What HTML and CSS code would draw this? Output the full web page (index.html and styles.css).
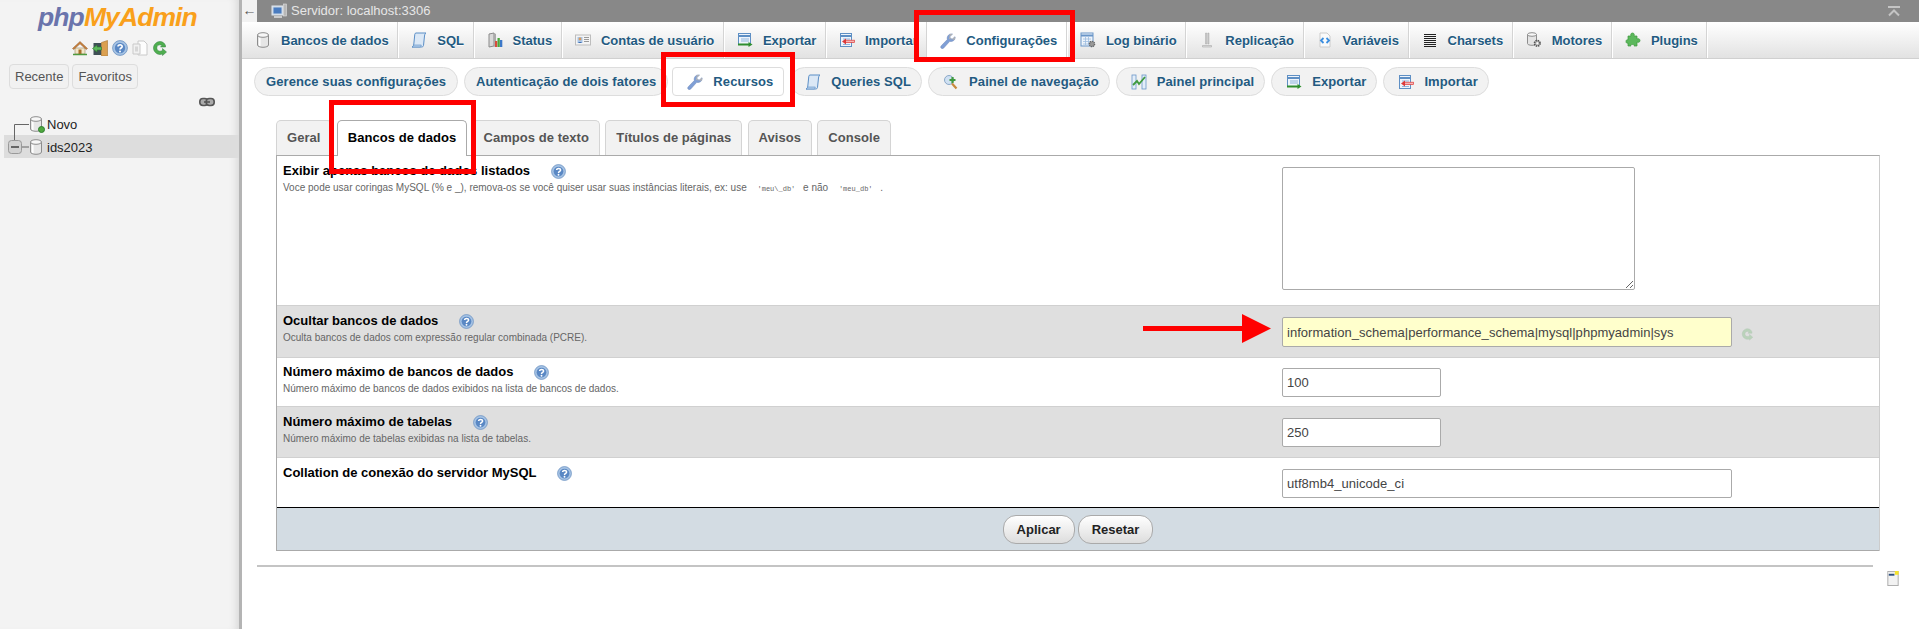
FILE: index.html
```html
<!DOCTYPE html>
<html lang="pt-BR">
<head>
    <meta charset="UTF-8">
    <title>phpMyAdmin</title>
    <link rel="stylesheet" href="styles.css">
</head>
<body>
    <svg class="defs" width="0" height="0">
        <symbol id="i-db" viewBox="0 0 16 16"><path d="M2.500 3v10c0 1.300 2.500 2.300 5.500 2.300s5.500-1 5.500-2.300V3z" fill="#e6e6e6" stroke="#8d8d8d"/><ellipse cx="8" cy="3" rx="5.500" ry="2.300" fill="#f7f7f7" stroke="#8d8d8d"/><path d="M4.800 6v8" stroke="#fff" stroke-width="1.500"/></symbol>
        <symbol id="i-sql" viewBox="0 0 16 16"><path d="M5 1h10c-1 .6-1.300 1.600-1.500 3l-1 9.500c-.1 1-1 1.500-2 1.500H1c1.200-.6 1.700-1.500 1.800-3L3.800 2.300C3.900 1.500 4.300 1 5 1z" fill="#dbe8f6" stroke="#5a8ec6"/><path d="M1 15c1.200-.6 1.500-1.300 1.700-2h7.600c-.1 1-.5 1.600-1 2z" fill="#b5cfea" stroke="#5a8ec6" stroke-width=".6"/></symbol>
        <symbol id="i-status" viewBox="0 0 16 16"><path d="M2 2l5-1v13l-5 1z" fill="#d8d8d8" stroke="#8a8a8a"/><path d="M7 1l2 1v12l-2 1z" fill="#aaa"/><rect x="8" y="9" width="2.300" height="6" fill="#d84c3c"/><rect x="10.500" y="6" width="2.300" height="9" fill="#4aa83c"/><rect x="13" y="8" width="2.300" height="7" fill="#3c78c8"/></symbol>
        <symbol id="i-user" viewBox="0 0 16 16"><rect x=".5" y="3" width="15" height="10" fill="#f4f4f4" stroke="#bdbdbd"/><rect x="2.500" y="5" width="5" height="6" fill="#a9c6e8"/><circle cx="5" cy="7" r="1.400" fill="#d99a5c"/><path d="M3 11c.3-1.500 3.700-1.500 4 0z" fill="#3d6db0"/><path d="M9 5.500h5M9 7.500h5M9 9.500h5" stroke="#9a9a9a"/></symbol>
        <symbol id="i-export" viewBox="0 0 16 16"><rect x="1.500" y="1.500" width="12" height="11" fill="#eef4fb" stroke="#5e8fc4"/><path d="M1.500 4h12" stroke="#5e8fc4" stroke-width="2"/><path d="M4 7h8M4 9h8" stroke="#8fb5dc"/><path d="M1 12.500h11.500" stroke="#2f8f2f" stroke-width="2"/><path d="M11.500 10l4 2.500-4 2.500z" fill="#2f8f2f"/></symbol>
        <symbol id="i-import" viewBox="0 0 16 16"><rect x="1.500" y="1.500" width="11" height="13" fill="#eef4fb" stroke="#5e8fc4"/><path d="M1.500 4h11" stroke="#5e8fc4" stroke-width="2"/><path d="M4 7h7M4 12.500h7" stroke="#8fb5dc"/><rect x="6" y="8.200" width="9.500" height="2.400" fill="#f7b5b5" stroke="#dc3a3a" stroke-width=".7"/><path d="M7 6.500l-4 3 4 3z" fill="#dc3a3a"/></symbol>
        <symbol id="i-wrench" viewBox="0 0 16 16"><path d="M1.300 15.200c-.8-.7-.8-1.700 0-2.500l6-6.200c-.5-2 .2-4.300 2.500-5.300.9-.4 1.900-.4 2.700-.1L9.900 3.600l.4 2 2 .5 2.700-2.400c.3 1 .1 2.200-.6 3.100-1.100 1.600-3 2-4.600 1.500L3.700 15c-.7.800-1.700.9-2.400.2z" fill="#7f9fd6" stroke="#6a84b4" stroke-width=".5"/><path d="M9.800 1.200c.9-.4 1.900-.4 2.700-.1L9.900 3.600l.4 2 2 .5 2.700-2.400c.3 1 .1 2.200-.6 3.100L9 6z" fill="#b4b4b4"/></symbol>
        <symbol id="i-log" viewBox="0 0 16 16"><rect x="1" y="1" width="12" height="13" fill="#eef4fb" stroke="#6a96c8"/><path d="M1 3.500h12" stroke="#6a96c8" stroke-width="2"/><path d="M3 7h8M3 9.500h8M3 12h8M5.500 5v8M8.500 5v8" stroke="#9dbde0" stroke-width=".8"/><circle cx="12" cy="12" r="2.600" fill="#9a9a9a" stroke="#666" stroke-width="1.400" stroke-dasharray="1.300 .7"/></symbol>
        <symbol id="i-repl" viewBox="0 0 16 16"><path d="M6.500 1h1.200v11H6.500zM8.800 1H10v11H8.800z" fill="#ccc" stroke="#999" stroke-width=".4"/><path d="M3.500 13.500h9v1.500h-9z" fill="#ddd" stroke="#aaa" stroke-width=".6"/></symbol>
        <symbol id="i-vars" viewBox="0 0 16 16"><path d="M3 1h7l3 3v11H3z" fill="#fafafa" stroke="#ccc"/><path d="M6.500 6L4 8.500 6.500 11M9.500 6L12 8.500 9.500 11" fill="none" stroke="#3c8fe0" stroke-width="1.800"/></symbol>
        <symbol id="i-charset" viewBox="0 0 16 16"><path d="M2 2.500h12M2 4.500h12M2 6.500h12M2 8.500h12M2 10.500h12M2 12.500h12M2 14.500h12" stroke="#222"/></symbol>
        <symbol id="i-engine" viewBox="0 0 16 16"><path d="M1.500 2.500v9c0 1 1.800 1.800 4.500 1.800s4.500-.8 4.500-1.800v-9z" fill="#e4e4e4" stroke="#8d8d8d"/><ellipse cx="6" cy="2.500" rx="4.500" ry="1.800" fill="#f7f7f7" stroke="#8d8d8d"/><circle cx="11.300" cy="11.300" r="2.800" fill="#bbb" stroke="#555" stroke-width="1.600" stroke-dasharray="1.400 .8"/><circle cx="11.300" cy="11.300" r="1" fill="#fff"/></symbol>
        <symbol id="i-plugin" viewBox="0 0 16 16"><path d="M3 4h3c-.5-1-.5-3 1.500-3S9.500 3 9 4h3v3c1-.5 3-.5 3 1.500S13 10.500 12 10v4H9c.5-1 .5-1.500-1.500-1.500S5.500 13 6 14H3v-3c-1 .4-2 .2-2-1.500S2 7.600 3 8z" fill="#5cb85c" stroke="#3d9a3d" stroke-width=".7"/></symbol>
        <symbol id="i-nav" viewBox="0 0 16 16"><circle cx="6" cy="6" r="4.500" fill="#cfe0f2" stroke="#8aa8c8"/><path d="M9 9.500l4.500 5" stroke="#c88a3c" stroke-width="2.200"/><path d="M9.500 3v6M6.500 6h6" stroke="#3f9a3f" stroke-width="2.200"/></symbol>
        <symbol id="i-main" viewBox="0 0 16 16"><rect x="1" y="1" width="4" height="14" fill="#e4eef9" stroke="#6a96c8" stroke-width=".8"/><rect x="11" y="1" width="4" height="14" fill="#e4eef9" stroke="#6a96c8" stroke-width=".8"/><path d="M2 11l4-4 2 3 6-7" fill="none" stroke="#3f9a3f" stroke-width="1.800"/></symbol>
        <symbol id="i-help" viewBox="0 0 16 16"><circle cx="8" cy="8" r="7.400" fill="#a6c3e4" stroke="#6a90c0" stroke-width=".8"/><circle cx="8" cy="8" r="5.200" fill="#5a88c4"/><path d="M6 6.500C6 4.200 10.300 4.300 10.200 6.600 10.100 8 8 8 8 9.500" fill="none" stroke="#fff" stroke-width="1.600"/><circle cx="8" cy="11.500" r="1" fill="#fff"/></symbol>
        <symbol id="i-home" viewBox="0 0 16 16"><path d="M3 8v6h10V8z" fill="#f3e6c8" stroke="#9a8a6a" stroke-width=".6"/><path d="M.5 8.500L8 1.500l7.500 7-1.200 1L8 3.800 1.700 9.500z" fill="#c9803c" stroke="#8a5424" stroke-width=".5"/><rect x="6.500" y="9.500" width="3" height="4.500" fill="#a8702c"/><path d="M1 14.500h14" stroke="#4f9a3f" stroke-width="1.500"/></symbol>
        <symbol id="i-door" viewBox="0 0 16 16"><rect x="1.500" y="3" width="8" height="12" fill="#3f4f55"/><path d="M9.500 2.500l6-2V16h-6z" fill="#dba050" stroke="#a87430" stroke-width=".6"/><path d="M.5 8.500L5 5v2h4.500v3H5v2z" fill="#5cb85c" stroke="#2f7f2f" stroke-width=".6"/></symbol>
        <symbol id="i-docs" viewBox="0 0 16 16"><path d="M6 1h6l3 3v11H6z" fill="#fdfdfd" stroke="#c9c9c9"/><path d="M1 4h7v10H1z" fill="#f1f1f1" stroke="#c9c9c9"/><rect x="3" y="6.500" width="3" height="5" fill="#d6d6d6"/></symbol>
        <symbol id="i-reload" viewBox="0 0 16 16"><path d="M13.500 5.500C12.500 3 10.500 1.500 8 1.500 4.500 1.500 1.500 4.500 1.500 8s3 6.500 6.500 6.500c1 0 1.700-.2 2.500-.5v1.500l4-3.500-4-3.500v2c-3 1.500-5.700.200-5.700-2.500S7.500 4 10 5.500l-1.500 1.500h5z" fill="#4fae4f" stroke="#2f7f3f" stroke-width=".5"/></symbol>
        <symbol id="i-link" viewBox="0 0 16 16"><rect x=".8" y="4.500" width="8" height="7" rx="3.200" fill="#aaa" stroke="#555" stroke-width="1.600"/><rect x="7.200" y="4.500" width="8" height="7" rx="3.200" fill="#aaa" stroke="#555" stroke-width="1.600"/><path d="M5 8h6" stroke="#555" stroke-width="1.600"/></symbol>
        <symbol id="i-server" viewBox="0 0 16 16"><rect x="1" y="3" width="11" height="9" fill="#c9d6e4" stroke="#dfe6ee"/><rect x="2.500" y="4.500" width="8" height="6" fill="#4a7cc0"/><path d="M3 14h8" stroke="#ccc" stroke-width="2"/><rect x="12.500" y="1" width="3" height="12" fill="#b8b8b8" stroke="#e0e0e0" stroke-width=".6"/></symbol>
        <symbol id="i-console" viewBox="0 0 12 16"><rect x=".5" y=".5" width="11" height="15" fill="#f2f2f2" stroke="#aaa"/><rect x="1" y="1" width="10" height="2.500" fill="#eee"/><rect x="1.500" y="3" width="6" height="2" fill="#2c4f80"/><rect x="8" y="0" width="4" height="4" fill="#f5e32c"/></symbol>
    </svg>

    <aside class="sidebar">
        <div class="logo"><span class="logo-php">php</span><span class="logo-my">MyAdmin</span></div>
        <div class="quick-icons">
            <svg class="ico"><use href="#i-home"/></svg>
            <svg class="ico"><use href="#i-door"/></svg>
            <svg class="ico"><use href="#i-help"/></svg>
            <svg class="ico"><use href="#i-docs"/></svg>
            <svg class="ico"><use href="#i-reload"/></svg>
        </div>
        <div class="side-btns">
            <a class="side-btn">Recente</a>
            <a class="side-btn">Favoritos</a>
        </div>
        <div class="side-link"><svg class="ico"><use href="#i-link"/></svg></div>
        <ul class="tree">
            <li class="tree-row">
                <svg class="tree-lines" width="25" height="22"><path d="M10.500 22V11.500H25" fill="none" stroke="#666"/></svg>
                <span class="db-wrap"><svg class="ico-db"><use href="#i-db"/></svg><i class="db-plus"></i></span>
                <span>Novo</span>
            </li>
            <li class="tree-row tree-active">
                <svg class="tree-lines" width="25" height="23"><path d="M10.500 0V5" fill="none" stroke="#666"/><rect x="4.500" y="5.500" width="13" height="13" rx="3" fill="#d2d2d2" stroke="#999"/><path d="M7 12h8" stroke="#666" stroke-width="2"/><path d="M18 12h7" stroke="#666"/></svg>
                <span class="db-wrap"><svg class="ico-db"><use href="#i-db"/></svg></span>
                <span>ids2023</span>
            </li>
        </ul>
    </aside>

    <main class="main">
        <div class="topbar">
            <a class="back">←</a>
            <svg class="ico server-ico"><use href="#i-server"/></svg>
            <span class="server-name">Servidor: localhost:3306</span>
            <svg class="collapse" width="12" height="11" viewBox="0 0 12 11"><path d="M0 1h12M1 9.500l5-5 5 5" fill="none" stroke="#c4c4c4" stroke-width="2"/></svg>
        </div>

        <nav class="tabs">
            <a class="tab"><svg class="ico"><use href="#i-db"/></svg>Bancos de dados</a>
            <a class="tab"><svg class="ico"><use href="#i-sql"/></svg>SQL</a>
            <a class="tab"><svg class="ico"><use href="#i-status"/></svg>Status</a>
            <a class="tab"><svg class="ico"><use href="#i-user"/></svg>Contas de usuário</a>
            <a class="tab"><svg class="ico"><use href="#i-export"/></svg>Exportar</a>
            <a class="tab"><svg class="ico"><use href="#i-import"/></svg>Importar</a>
            <a class="tab tab-active"><svg class="ico"><use href="#i-wrench"/></svg>Configurações</a>
            <a class="tab"><svg class="ico"><use href="#i-log"/></svg>Log binário</a>
            <a class="tab"><svg class="ico"><use href="#i-repl"/></svg>Replicação</a>
            <a class="tab"><svg class="ico"><use href="#i-vars"/></svg>Variáveis</a>
            <a class="tab"><svg class="ico"><use href="#i-charset"/></svg>Charsets</a>
            <a class="tab"><svg class="ico"><use href="#i-engine"/></svg>Motores</a>
            <a class="tab"><svg class="ico"><use href="#i-plugin"/></svg>Plugins</a>
        </nav>

        <div class="pills">
            <a class="pill">Gerence suas configurações</a>
            <a class="pill">Autenticação de dois fatores</a>
            <a class="pill pill-icon pill-active"><svg class="ico"><use href="#i-wrench"/></svg>Recursos</a>
            <a class="pill pill-icon"><svg class="ico"><use href="#i-sql"/></svg>Queries SQL</a>
            <a class="pill pill-icon"><svg class="ico"><use href="#i-nav"/></svg>Painel de navegação</a>
            <a class="pill pill-icon"><svg class="ico"><use href="#i-main"/></svg>Painel principal</a>
            <a class="pill pill-icon"><svg class="ico"><use href="#i-export"/></svg>Exportar</a>
            <a class="pill pill-icon"><svg class="ico"><use href="#i-import"/></svg>Importar</a>
        </div>

        <div class="subtabs">
            <a class="subtab">Geral</a>
            <a class="subtab subtab-active">Bancos de dados</a>
            <a class="subtab">Campos de texto</a>
            <a class="subtab">Títulos de páginas</a>
            <a class="subtab">Avisos</a>
            <a class="subtab">Console</a>
        </div>

        <form class="panel">
            <div class="row row-first">
                <div class="row-label">
                    <div class="label">Exibir apenas bancos de dados listados <svg class="help"><use href="#i-help"/></svg></div>
                    <div class="desc">Voce pode usar coringas MySQL (% e _), remova-os se você quiser usar suas instâncias literais, ex: use <code>'meu\_db'</code> e não <code>'meu_db'</code> .</div>
                </div>
                <textarea class="field-area"></textarea>
            </div>
            <div class="row row-alt row-regex">
                <div class="row-label">
                    <div class="label">Ocultar bancos de dados <svg class="help"><use href="#i-help"/></svg></div>
                    <div class="desc">Oculta bancos de dados com expressão regular combinada (PCRE).</div>
                </div>
                <input class="field field-wide field-changed" type="text" value="information_schema|performance_schema|mysql|phpmyadmin|sys">
                <svg class="ico restore"><use href="#i-reload"/></svg>
            </div>
            <div class="row row-num">
                <div class="row-label">
                    <div class="label">Número máximo de bancos de dados <svg class="help"><use href="#i-help"/></svg></div>
                    <div class="desc">Número máximo de bancos de dados exibidos na lista de bancos de dados.</div>
                </div>
                <input class="field" type="text" value="100">
            </div>
            <div class="row row-alt row-tables">
                <div class="row-label">
                    <div class="label">Número máximo de tabelas <svg class="help"><use href="#i-help"/></svg></div>
                    <div class="desc">Número máximo de tabelas exibidas na lista de tabelas.</div>
                </div>
                <input class="field" type="text" value="250">
            </div>
            <div class="row row-last">
                <div class="row-label">
                    <div class="label">Collation de conexão do servidor MySQL <svg class="help"><use href="#i-help"/></svg></div>
                </div>
                <input class="field field-wide" type="text" value="utf8mb4_unicode_ci">
            </div>
            <div class="panel-foot">
                <button class="btn" type="button">Aplicar</button>
                <button class="btn" type="button">Resetar</button>
            </div>
        </form>

        <div class="page-end"></div>
        <div class="console-toggle"><svg class="console-ico"><use href="#i-console"/></svg></div>
    </main>

    <!-- marcacoes vermelhas do tutorial -->
    <div class="mark mark-config"></div>
    <div class="mark mark-recursos"></div>
    <div class="mark mark-bancos"></div>
    <svg class="mark-arrow" width="128" height="30" viewBox="0 0 128 30"><path d="M0 12h99V0l29 14.500L99 29V17H0z" fill="#f00"/></svg>
</body>
</html>
```

FILE: styles.css
```css
* {
    box-sizing: border-box;
}
html, body {
    height: 100%;
}
body {
    margin: 0;
    display: flex;
    overflow: hidden;
    position: relative;
    background-color: #fff;
    font-family: "Liberation Sans", Arial, sans-serif;
    font-size: 13px;
    color: #444;
}
.defs {
    position: absolute;
}
.ico {
    width: 16px;
    height: 16px;
    flex: none;
}

/* sidebar */
.sidebar {
    width: 242px;
    flex: none;
    background-color: #f3f3f3;
    border-right: 3px solid #b4b4b4;
    box-shadow: inset -8px 0 8px -6px rgba(0, 0, 0, 0.12);
}
.logo {
    height: 40px;
    padding: 1px 0 0 38px;
    font-size: 26.5px;
    font-weight: bold;
    font-style: italic;
    letter-spacing: -0.9px;
    line-height: 32px;
}
.logo-php {
    color: #6a74ac;
}
.logo-my {
    color: #f9a01b;
}
.quick-icons {
    display: flex;
    gap: 4px;
    padding-left: 72px;
    height: 24px;
}
.side-btns {
    display: flex;
    gap: 3px;
    padding-left: 9px;
}
.side-btn {
    padding: 0 5px;
    height: 25px;
    line-height: 23px;
    border: 1px solid #ddd;
    border-radius: 4px;
    background-color: #f1f1f1;
    color: #555;
}
.side-link {
    display: flex;
    justify-content: flex-end;
    padding: 5px 24px 0 0;
    height: 24px;
}
.tree {
    list-style: none;
    margin: 0;
    padding: 0 0 0 4px;
    color: #222;
}
.tree-row {
    display: flex;
    align-items: center;
    height: 22px;
}
.tree-active {
    height: 23px;
    background-color: #ddd;
}
.tree-active span:last-child {
    padding-top: 2px;
}
.tree-lines {
    flex: none;
}
.db-wrap {
    position: relative;
    display: block;
    width: 18px;
    height: 16px;
    margin-left: -1px;
    margin-right: 1px;
}
.ico-db {
    width: 16px;
    height: 16px;
}
.db-plus {
    position: absolute;
    right: 1px;
    bottom: -1px;
    width: 7px;
    height: 7px;
    border-radius: 50%;
    background-color: #4fa83f;
    border: 1px solid #2f7f2f;
}

/* top of the page */
.main {
    flex: 1;
    min-width: 0;
}
.topbar {
    display: flex;
    align-items: center;
    height: 22px;
    background-color: #888;
    color: #e6e6e6;
}
.back {
    width: 15px;
    height: 22px;
    line-height: 21px;
    text-align: center;
    background-color: #f2f2f2;
    color: #555;
    font-size: 14px;
}
.server-ico {
    margin: 0 4px 0 14px;
}
.server-name {
    padding-bottom: 2px;
}
.collapse {
    margin-left: auto;
    margin-right: 19px;
}
.tabs {
    display: flex;
    height: 37px;
    padding-left: 1px;
    background: linear-gradient(#fff, #e2e2e2);
    border-bottom: 1px solid #d0d0d0;
}
.tab {
    display: flex;
    align-items: center;
    gap: 10px;
    padding: 0 9.6px 0 12px;
    border-right: 1px solid #fff;
    box-shadow: inset -1px 0 0 #d4d4d4;
    font-weight: bold;
    color: #235a81;
    text-shadow: 0 1px 0 #fff;
    white-space: nowrap;
}
.tab-active {
    background-color: #fff;
    height: 37px;
}

.pills {
    display: flex;
    gap: 6px;
    padding: 8px 0 0 12px;
}
.pill {
    display: flex;
    align-items: center;
    gap: 10px;
    height: 29px;
    padding: 0 11px;
    border: 1px solid #ddd;
    border-radius: 15px;
    background-color: #f2f2f2;
    font-weight: bold;
    letter-spacing: 0.09px;
    color: #235a81;
    white-space: nowrap;
}
.pill-icon {
    padding: 0 10px 0 14px;
}
.pill-active {
    margin-left: -2px;
    border-radius: 4px;
    background-color: #fff;
}

.subtabs {
    display: flex;
    gap: 5.3px;
    margin: 24px 0 0 34px;
    height: 35px;
}
.subtab {
    padding: 0 10px;
    line-height: 33px;
    border: 1px solid #d4d4d4;
    border-bottom: 0;
    border-radius: 5px 5px 0 0;
    background-color: #f2f2f2;
    font-weight: bold;
    letter-spacing: 0.05px;
    color: #555;
}
.subtab-active {
    height: 36px;
    position: relative;
    border-color: #aaa;
    background-color: #fff;
    color: #000;
}

/* settings form */
.panel {
    margin: 0 39px 0 34px;
    border-top: 1px solid #aaa;
    border-left: 1px solid #aaa;
    border-right: 1px solid #ccc;
}
.row {
    display: flex;
    align-items: flex-start;
    border-bottom: 1px solid #d0d0d0;
    padding: 6px 0 0 6px;
}
.row-alt {
    background-color: #dfdfdf;
}
.row-first {
    height: 150px;
}
.row-regex {
    height: 52px;
}
.row-num {
    height: 49px;
    padding-top: 5px;
}
.row-tables {
    height: 51px;
}
.row-last {
    height: 50px;
    border-bottom: 1px solid #000;
}
.row-label {
    width: 999px;
    flex: none;
}
.label {
    display: flex;
    align-items: center;
    gap: 17px;
    height: 16px;
    font-weight: bold;
    color: #000;
    white-space: pre;
}
.help {
    width: 15px;
    height: 15px;
    margin-top: 3px;
}
.desc {
    margin-top: 3px;
    font-size: 10px;
    line-height: 13px;
    color: #666;
    white-space: pre-wrap;
}
.desc code {
    font-family: "Liberation Mono", monospace;
    font-size: 7px;
    margin: 0 5px 0 8px;
}
.field {
    width: 159px;
    height: 29px;
    margin-top: 5px;
    padding: 0 4px;
    border: 1px solid #aaa;
    border-radius: 2px;
    background-color: #fff;
    color: #444;
    font-family: "Liberation Sans", Arial, sans-serif;
    font-size: 13px;
}
.field-wide {
    width: 450px;
    letter-spacing: 0.04px;
}
.field-changed {
    height: 30px;
    background-color: #ffc;
}
.field-area {
    width: 353px;
    height: 123px;
    margin-top: 5px;
    border: 1px solid #aaa;
    border-radius: 2px;
    background-color: #fff;
}
.restore {
    width: 13px;
    height: 14px;
    margin: 15px 0 0 9px;
    opacity: 0.25;
}
.panel-foot {
    display: flex;
    justify-content: center;
    gap: 3px;
    height: 43px;
    padding-top: 7px;
    background-color: #d3dce3;
    border-bottom: 1px solid #aaa;
}
.btn {
    height: 29px;
    padding: 0 13px;
    border: 1px solid #aaa;
    border-radius: 13px;
    background: linear-gradient(#fff, #ddd);
    font-family: "Liberation Sans", Arial, sans-serif;
    font-size: 13px;
    font-weight: bold;
    color: #222;
}
.page-end {
    margin: 14px 46px 0 15px;
    border-top: 2px solid #c4c4c4;
}
.console-toggle {
    display: flex;
    justify-content: flex-end;
    padding: 4px 20px 0 0;
}
.console-ico {
    width: 12px;
    height: 15px;
}

/* tutorial annotations */
.mark {
    position: absolute;
    border: 5px solid #f00;
}
.mark-config {
    left: 914px;
    top: 10px;
    width: 161px;
    height: 52px;
}
.mark-recursos {
    left: 661px;
    top: 52px;
    width: 134px;
    height: 55px;
}
.mark-bancos {
    left: 329px;
    top: 100px;
    width: 147px;
    height: 74px;
}
.mark-arrow {
    position: absolute;
    left: 1143px;
    top: 314px;
}
```
